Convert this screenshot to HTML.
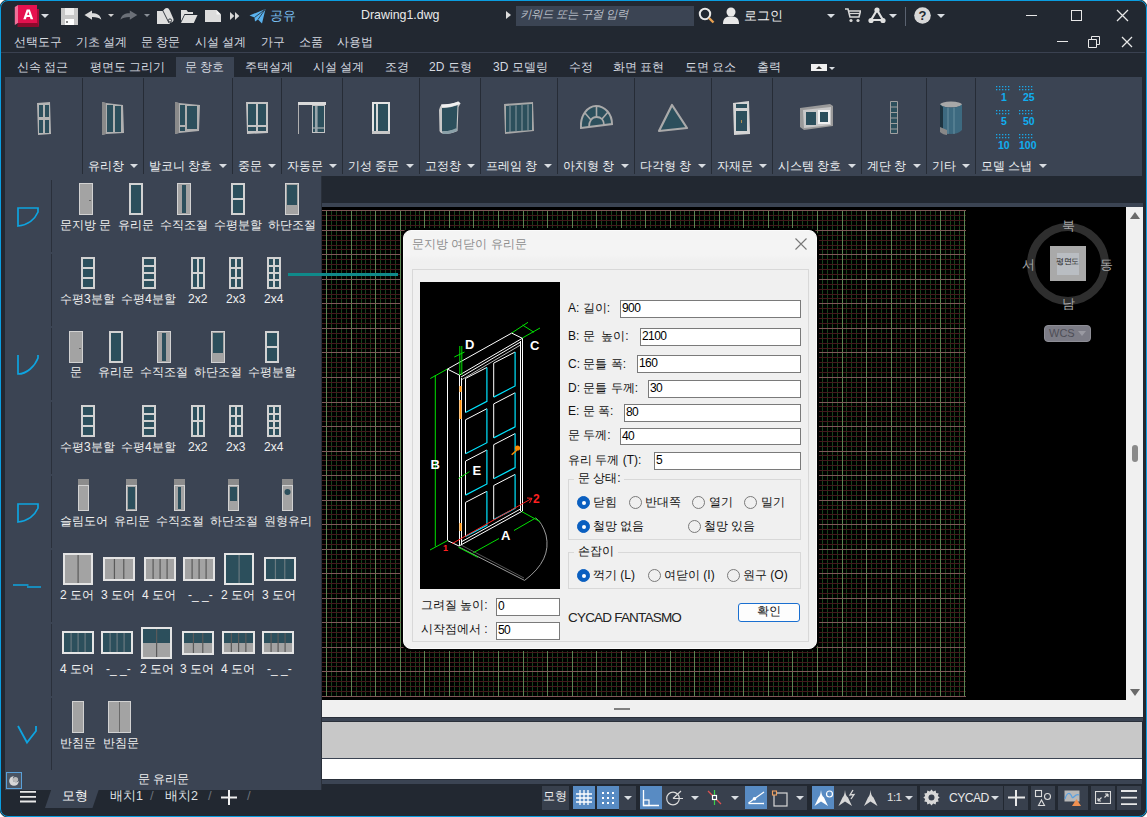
<!DOCTYPE html>
<html><head><meta charset="utf-8">
<style>
*{box-sizing:border-box;margin:0;padding:0}
html,body{width:1147px;height:817px;overflow:hidden;background:#fff}
body{font-family:"Liberation Sans",sans-serif;font-size:13px;color:#e6e6e6;position:relative}
.a{position:absolute}
.t{position:absolute;white-space:nowrap;line-height:1}
#win{left:0;top:0;width:1147px;height:817px;background:#222831;border:1px solid #0a9de0;border-radius:8px;box-shadow:0 0 0 0.5px #222}
.menu{color:#d6dae0;font-size:12.2px}
.tab{color:#d6dae0;font-size:12px}
.rib{background:#3b4453}
.sep{position:absolute;width:1px;background:#262c36}
.lbl{color:#eef0f2;font-size:12.1px}
.dd{position:absolute;width:0;height:0;border-left:4px solid transparent;border-right:4px solid transparent;border-top:4px solid #d9dde2}
.fl{color:#f0f0f0;font-size:12px}
.dlg{color:#111;font-size:12px}
.inp{position:absolute;background:#fff;border:1px solid #7a7a7a;font-size:12px;color:#000;padding-left:1px;line-height:15px;letter-spacing:-0.6px}
.rad{position:absolute;width:13px;height:13px;border-radius:50%;border:1px solid #7a7a7a;background:transparent}
.rad.on{border-color:#0a5fc0;background:#0a5fc0}
.rad.on:after{content:"";position:absolute;left:3.5px;top:3.5px;width:4px;height:4px;border-radius:50%;background:#fff}
.sb{position:absolute;top:786px;height:24px;background:#38404d}
.sbb{position:absolute;top:786px;height:23px;background:#588bc3}
</style></head><body>
<div id="win" class="a"></div>

<!-- ribbon tab row active -->
<div class="a" style="left:176px;top:57px;width:58px;height:20px;background:#3b4453"></div>
<!-- line under menu -->
<div class="a" style="left:1px;top:52px;width:1144px;height:1px;background:#3a4150"></div>

<!-- ribbon panel -->
<div class="a rib" style="left:5px;top:77px;width:1137px;height:99px"></div>

<!-- canvas top strip -->
<div class="a" style="left:321px;top:203px;width:822px;height:4px;background:#3b4453"></div>
<!-- canvas -->
<div class="a" style="left:321px;top:207px;width:821px;height:493px;background:#000"></div>
<!--GRID--><svg class="a" style="left:321px;top:207px" width="821" height="493" shape-rendering="crispEdges">
<path d="M0.5 3V490M10.5 3V490M15.5 3V490M20.5 3V490M25.5 3V490M35.5 3V490M40.5 3V490M44.5 3V490M49.5 3V490M59.5 3V490M64.5 3V490M69.5 3V490M74.5 3V490M84.5 3V490M89.5 3V490M94.5 3V490M98.5 3V490M108.5 3V490M113.5 3V490M118.5 3V490M123.5 3V490M133.5 3V490M138.5 3V490M143.5 3V490M148.5 3V490M157.5 3V490M162.5 3V490M167.5 3V490M172.5 3V490M182.5 3V490M187.5 3V490M192.5 3V490M197.5 3V490M206.5 3V490M211.5 3V490M216.5 3V490M221.5 3V490M231.5 3V490M236.5 3V490M241.5 3V490M246.5 3V490M256.5 3V490M260.5 3V490M265.5 3V490M270.5 3V490M280.5 3V490M285.5 3V490M290.5 3V490M295.5 3V490M305.5 3V490M309.5 3V490M314.5 3V490M319.5 3V490M329.5 3V490M334.5 3V490M339.5 3V490M344.5 3V490M354.5 3V490M359.5 3V490M363.5 3V490M368.5 3V490M378.5 3V490M383.5 3V490M388.5 3V490M393.5 3V490M403.5 3V490M408.5 3V490M413.5 3V490M417.5 3V490M427.5 3V490M432.5 3V490M437.5 3V490M442.5 3V490M452.5 3V490M457.5 3V490M462.5 3V490M467.5 3V490M476.5 3V490M481.5 3V490M486.5 3V490M491.5 3V490M501.5 3V490M506.5 3V490M511.5 3V490M516.5 3V490M525.5 3V490M530.5 3V490M535.5 3V490M540.5 3V490M550.5 3V490M555.5 3V490M560.5 3V490M565.5 3V490M575.5 3V490M579.5 3V490M584.5 3V490M589.5 3V490M599.5 3V490M604.5 3V490M609.5 3V490M614.5 3V490M624.5 3V490M629.5 3V490M633.5 3V490M638.5 3V490" stroke="#1a421b" stroke-width="1"/>
<path d="M0 8.5H645M0 13.5H645M0 18.5H645M0 28.5H645M0 33.5H645M0 38.5H645M0 42.5H645M0 52.5H645M0 57.5H645M0 62.5H645M0 67.5H645M0 77.5H645M0 82.5H645M0 87.5H645M0 91.5H645M0 101.5H645M0 106.5H645M0 111.5H645M0 116.5H645M0 126.5H645M0 131.5H645M0 136.5H645M0 141.5H645M0 150.5H645M0 155.5H645M0 160.5H645M0 165.5H645M0 175.5H645M0 180.5H645M0 185.5H645M0 190.5H645M0 199.5H645M0 204.5H645M0 209.5H645M0 214.5H645M0 224.5H645M0 229.5H645M0 234.5H645M0 239.5H645M0 248.5H645M0 253.5H645M0 258.5H645M0 263.5H645M0 273.5H645M0 278.5H645M0 283.5H645M0 288.5H645M0 298.5H645M0 302.5H645M0 307.5H645M0 312.5H645M0 322.5H645M0 327.5H645M0 332.5H645M0 337.5H645M0 347.5H645M0 352.5H645M0 356.5H645M0 361.5H645M0 371.5H645M0 376.5H645M0 381.5H645M0 386.5H645M0 396.5H645M0 401.5H645M0 405.5H645M0 410.5H645M0 420.5H645M0 425.5H645M0 430.5H645M0 435.5H645M0 445.5H645M0 450.5H645M0 455.5H645M0 459.5H645M0 469.5H645M0 474.5H645M0 479.5H645M0 484.5H645" stroke="#441a1c" stroke-width="1"/>
<path d="M5.5 3V490M30.5 3V490M54.5 3V490M79.5 3V490M103.5 3V490M128.5 3V490M152.5 3V490M177.5 3V490M202.5 3V490M226.5 3V490M251.5 3V490M275.5 3V490M300.5 3V490M324.5 3V490M349.5 3V490M373.5 3V490M398.5 3V490M422.5 3V490M447.5 3V490M471.5 3V490M496.5 3V490M521.5 3V490M545.5 3V490M570.5 3V490M594.5 3V490M619.5 3V490M643.5 3V490" stroke="#5a8552" stroke-width="1"/>
<path d="M0 3.5H645M0 23.5H645M0 47.5H645M0 72.5H645M0 96.5H645M0 121.5H645M0 145.5H645M0 170.5H645M0 195.5H645M0 219.5H645M0 244.5H645M0 268.5H645M0 293.5H645M0 317.5H645M0 342.5H645M0 366.5H645M0 391.5H645M0 415.5H645M0 440.5H645M0 464.5H645M0 489.5H645" stroke="#805858" stroke-width="1"/>
</svg><!--/GRID-->

<!-- scrollbar -->
<div class="a" style="left:1126px;top:207px;width:17px;height:493px;background:#f0f0f0"></div>
<div class="a" style="left:1132px;top:445px;width:6px;height:17px;border-radius:3px;background:#8a8a8a"></div>

<!-- bottom bars -->
<div class="a" style="left:321px;top:700px;width:822px;height:17px;background:#f0f0f0"></div>
<div class="a" style="left:614px;top:708px;width:16px;height:2px;background:#808080"></div>
<div class="a" style="left:321px;top:717px;width:822px;height:5px;background:#3b4453;border-top:1px solid #2a303a;border-bottom:1px solid #2a303a"></div>
<div class="a" style="left:321px;top:722px;width:821px;height:36px;background:#c8c8c8"></div>
<div class="a" style="left:321px;top:758px;width:821px;height:1px;background:#3b4453"></div>
<div class="a" style="left:321px;top:759px;width:821px;height:20px;background:#fff"></div>
<div class="a" style="left:321px;top:779px;width:821px;height:5px;background:#3b4453;border-top:1px solid #2a303a"></div>

<!-- TITLEBAR -->
<svg class="a" style="left:14px;top:5px" width="26" height="23" viewBox="0 0 26 23">
<path d="M4 0 H23 V18 H4 Z" fill="#e5114f"/>
<path d="M0.8 2 L4 0 V18 L0.8 20 Z" fill="#f07098"/>
<path d="M3.5 18 H23 L25 22 H3.5 Z" fill="#8c0a2c"/>
<path d="M23 4 H25 V22 L23 18 Z" fill="#a80c38"/>
<path d="M9.3 14.2 L12.7 4.4 H15.8 L19.2 14.2 H16.6 L15.9 12 H12.6 L11.9 14.2 Z M13.1 9.9 H15.4 L14.25 6.4 Z" fill="#fff" fill-rule="evenodd"/>
</svg>
<div class="dd" style="left:41px;top:14px"></div>
<svg class="a" style="left:61px;top:8px" width="17" height="17" viewBox="0 0 17 17">
<path d="M0 0H17V17H0Z" fill="#c8c8c8"/><path d="M4 0H13V7H4Z" fill="#efefef"/><path d="M4 11H13V17H4Z" fill="#fff"/><path d="M5 13H7V15H5Z" fill="#888"/>
</svg>
<svg class="a" style="left:84px;top:10px" width="18" height="11" viewBox="0 0 18 11"><path d="M0.5 5 L8 0.5 V3.3 C13 3.3 16.5 5 17.3 9.8 C15.5 7.8 12.5 7 8 7 V9.8 Z" fill="#dcdcdc"/></svg>
<div class="dd" style="left:108px;top:14px;border-left-width:3px;border-right-width:3px;border-top:3.5px solid #d0d0d0"></div>
<svg class="a" style="left:120px;top:10px" width="18" height="11" viewBox="0 0 18 11"><path d="M17.3 5 L9.8 0.5 V3.3 C4.8 3.3 1.3 5 0.5 9.8 C2.3 7.8 5.3 7 9.8 7 V9.8 Z" fill="#6b7078"/></svg>
<div class="dd" style="left:144px;top:14px;border-left-width:3px;border-right-width:3px;border-top:3.5px solid #8a9098"></div>
<svg class="a" style="left:157px;top:8px" width="17" height="16" viewBox="0 0 17 16"><path d="M0 3 L6 3 C7 1.5 8 0 10 0 C11.5 0 12 1 13 3 L16.5 11 C17 13.5 15 15 13 14.5 L12.5 16 H0 Z" fill="#dedede"/><path d="M6 3 L12 15" stroke="#222831" stroke-width="0.9"/><circle cx="13" cy="12.5" r="1.6" fill="none" stroke="#222831" stroke-width="0.9"/></svg>
<svg class="a" style="left:181px;top:10px" width="17" height="13" viewBox="0 0 17 13"><path d="M0 0 H5.5 L7 2 H12 V4 H3.5 L0 11 Z" fill="#dedede"/><path d="M3.8 5 H16.5 L12.8 13 H0 Z" fill="#dedede"/></svg>
<svg class="a" style="left:205px;top:10px" width="16" height="12" viewBox="0 0 16 12"><path d="M0 0 H11.5 L16 4.5 V12 H0 Z" fill="#dcdcdc"/><path d="M11.5 0 L16 4.5 H11.5 Z" fill="#f4f4f4"/></svg>
<svg class="a" style="left:230px;top:12px" width="10" height="8"><path d="M0 0 L4.3 4 L0 8Z M5 0 L9.3 4 L5 8Z" fill="#d8d8d8"/></svg>
<svg class="a" style="left:249px;top:9px" width="17" height="15" viewBox="0 0 17 15"><path d="M0.5 6.5 L16.5 0 L13 14.5 L9 10.5 L6 12.5 L5.5 8.5 Z" fill="#5ab2ee"/><path d="M5.5 8.5 L16 0.5 M9 10.5 L16 0.5" stroke="#222831" stroke-width="0.8"/></svg>
<div class="t menu" style="left:270px;top:9px;font-size:13px;color:#7cc0f4">공유</div>
<div class="t" style="left:361px;top:9px;font-size:12.4px;color:#eaeaea">Drawing1.dwg</div>
<div class="a" style="left:506px;top:11px;width:0;height:0;border-top:4px solid transparent;border-bottom:4px solid transparent;border-left:5px solid #ddd"></div>
<div class="a" style="left:516px;top:6px;width:178px;height:20px;background:#3b4453"></div>
<div class="t" style="left:520px;top:9px;font-size:11.4px;color:#b8bec6;font-style:italic">키워드 또는 구절 입력</div>
<svg class="a" style="left:698px;top:7px" width="17" height="17" viewBox="0 0 17 17"><circle cx="7" cy="7" r="5.2" fill="none" stroke="#e8e8e8" stroke-width="2"/><path d="M11 11 L15.5 15.5" stroke="#e8a050" stroke-width="2.4"/></svg>
<svg class="a" style="left:723px;top:7px" width="16" height="17" viewBox="0 0 16 17"><circle cx="8" cy="5" r="4.5" fill="#e8e8e8"/><path d="M0 17 C0 11 3 9.5 8 9.5 C13 9.5 16 11 16 17Z" fill="#e8e8e8"/></svg>
<div class="t menu" style="left:744px;top:9px;font-size:13px;color:#f0f0f0">로그인</div>
<div class="dd" style="left:827px;top:14px"></div>
<svg class="a" style="left:845px;top:8px" width="16" height="15" viewBox="0 0 16 15"><path d="M0 1 H3 L5 9 H14 L15.5 3 H4" fill="none" stroke="#d8d8d8" stroke-width="1.6"/><path d="M5 5.5 H15" stroke="#d8d8d8" stroke-width="1.2"/><circle cx="6" cy="12.5" r="1.6" fill="#d8d8d8"/><circle cx="13" cy="12.5" r="1.6" fill="#d8d8d8"/></svg>
<svg class="a" style="left:868px;top:7px" width="18" height="17" viewBox="0 0 18 17"><path d="M9 3 L3 13 M9 3 L15 13 M3 13 H15" stroke="#e0e0e0" stroke-width="2.2" fill="none"/><circle cx="9" cy="3" r="2.6" fill="#e0e0e0"/><circle cx="3" cy="13.5" r="2.6" fill="#e0e0e0"/><circle cx="15" cy="13.5" r="2.6" fill="#e0e0e0"/></svg>
<div class="dd" style="left:889px;top:14px"></div>
<div class="a" style="left:905px;top:7px;width:1px;height:19px;background:#5a6270"></div>
<svg class="a" style="left:914px;top:7px" width="17" height="17" viewBox="0 0 17 17"><circle cx="8.5" cy="8.5" r="8.3" fill="#d8d8d8"/><text x="8.5" y="13.2" text-anchor="middle" font-family="Liberation Sans" font-weight="bold" font-size="13" fill="#222831">?</text></svg>
<div class="dd" style="left:937px;top:14px"></div>
<!-- window controls -->
<div class="a" style="left:1026px;top:15px;width:11px;height:1px;background:#e8e8e8"></div>
<div class="a" style="left:1071px;top:10px;width:11px;height:11px;border:1px solid #e8e8e8"></div>
<svg class="a" style="left:1116px;top:9px" width="13" height="13"><path d="M1 1 L12 12 M12 1 L1 12" stroke="#e8e8e8" stroke-width="1.3"/></svg>
<div class="a" style="left:1057px;top:41px;width:11px;height:1px;background:#e8e8e8"></div>
<svg class="a" style="left:1088px;top:36px" width="12" height="12"><path d="M0.5 3.5 H8.5 V11.5 H0.5Z M3.5 3.5 V0.5 H11.5 V8.5 H8.5" fill="none" stroke="#e8e8e8" stroke-width="1"/></svg>
<svg class="a" style="left:1121px;top:36px" width="12" height="12"><path d="M1 1 L11 11 M11 1 L1 11" stroke="#e8e8e8" stroke-width="1.3"/></svg>

<!-- MENU -->
<div class="t menu" style="left:14px;top:36px">선택도구</div>
<div class="t menu" style="left:76px;top:36px">기초 설계</div>
<div class="t menu" style="left:141px;top:36px">문 창문</div>
<div class="t menu" style="left:195px;top:36px">시설 설계</div>
<div class="t menu" style="left:261px;top:36px">가구</div>
<div class="t menu" style="left:299px;top:36px">소품</div>
<div class="t menu" style="left:337px;top:36px">사용법</div>

<!-- TABS -->
<div class="t tab" style="left:17px;top:61px">신속 접근</div>
<div class="t tab" style="left:90px;top:61px">평면도 그리기</div>
<div class="t tab" style="left:185px;top:61px">문 창호</div>
<div class="t tab" style="left:245px;top:61px">주택설계</div>
<div class="t tab" style="left:313px;top:61px">시설 설계</div>
<div class="t tab" style="left:385px;top:61px">조경</div>
<div class="t tab" style="left:429px;top:61px">2D 도형</div>
<div class="t tab" style="left:493px;top:61px">3D 모델링</div>
<div class="t tab" style="left:569px;top:61px">수정</div>
<div class="t tab" style="left:613px;top:61px">화면 표현</div>
<div class="t tab" style="left:685px;top:61px">도면 요소</div>
<div class="t tab" style="left:757px;top:61px">출력</div>
<div class="a" style="left:811px;top:64px;width:16px;height:7px;background:#f0f0f0"></div>
<div class="a" style="left:816px;top:66px;width:0;height:0;border-left:3px solid transparent;border-right:3px solid transparent;border-bottom:3px solid #333"></div>
<div class="dd" style="left:829px;top:67px;border-left-width:3px;border-right-width:3px;border-top-width:3px"></div>

<!-- RIBBON separators -->
<div class="sep" style="left:82px;top:78px;height:96px"></div>
<div class="sep" style="left:143px;top:78px;height:96px"></div>
<div class="sep" style="left:232px;top:78px;height:96px"></div>
<div class="sep" style="left:281px;top:78px;height:96px"></div>
<div class="sep" style="left:342px;top:78px;height:96px"></div>
<div class="sep" style="left:419px;top:78px;height:96px"></div>
<div class="sep" style="left:480px;top:78px;height:96px"></div>
<div class="sep" style="left:557px;top:78px;height:96px"></div>
<div class="sep" style="left:634px;top:78px;height:96px"></div>
<div class="sep" style="left:711px;top:78px;height:96px"></div>
<div class="sep" style="left:772px;top:78px;height:96px"></div>
<div class="sep" style="left:861px;top:78px;height:96px"></div>
<div class="sep" style="left:926px;top:78px;height:96px"></div>
<div class="sep" style="left:975px;top:78px;height:96px"></div>
<!-- RIBBON labels -->
<div class="t lbl" style="left:88px;top:160px">유리창</div><div class="dd" style="left:130px;top:164px"></div>
<div class="t lbl" style="left:149px;top:160px">발코니 창호</div><div class="dd" style="left:219px;top:164px"></div>
<div class="t lbl" style="left:238px;top:160px">중문</div><div class="dd" style="left:268px;top:164px"></div>
<div class="t lbl" style="left:287px;top:160px">자동문</div><div class="dd" style="left:329px;top:164px"></div>
<div class="t lbl" style="left:348px;top:160px">기성 중문</div><div class="dd" style="left:406px;top:164px"></div>
<div class="t lbl" style="left:425px;top:160px">고정창</div><div class="dd" style="left:467px;top:164px"></div>
<div class="t lbl" style="left:486px;top:160px">프레임 창</div><div class="dd" style="left:544px;top:164px"></div>
<div class="t lbl" style="left:563px;top:160px">아치형 창</div><div class="dd" style="left:621px;top:164px"></div>
<div class="t lbl" style="left:640px;top:160px">다각형 창</div><div class="dd" style="left:698px;top:164px"></div>
<div class="t lbl" style="left:717px;top:160px">자재문</div><div class="dd" style="left:759px;top:164px"></div>
<div class="t lbl" style="left:778px;top:160px">시스템 창호</div><div class="dd" style="left:848px;top:164px"></div>
<div class="t lbl" style="left:867px;top:160px">계단 창</div><div class="dd" style="left:913px;top:164px"></div>
<div class="t lbl" style="left:932px;top:160px">기타</div><div class="dd" style="left:962px;top:164px"></div>
<div class="t lbl" style="left:981px;top:160px">모델 스냅</div><div class="dd" style="left:1039px;top:164px"></div>
<!-- RIBBON icons -->
<svg class="a" style="left:37px;top:102px" width="14" height="33" viewBox="0 0 14 33"><path d="M0 1 L13 0 L14 32 L1 33Z" fill="#b4b4b4"/><path d="M2 3H6V15H2Z M8 3H12V15H8Z M2 18H6V31H2Z M8 18H12V31H8Z" fill="#2c4f5c"/></svg>
<svg class="a" style="left:102px;top:102px" width="22" height="33" viewBox="0 0 22 33"><path d="M0 0 L4 1 L21 3 L22 31 L4 32 L0 33Z" fill="#b0b0b0"/><path d="M0 0 L4 1 L4 32 L0 33Z" fill="#8a8a8a"/><path d="M5 3H11V30H5Z M13 4H19V30H13Z" fill="#2c4f5c"/></svg>
<svg class="a" style="left:175px;top:102px" width="25" height="32" viewBox="0 0 25 32"><path d="M0 0 L4 1 L25 3 L24 29 L4 31 L0 32Z" fill="#b0b0b0"/><path d="M0 0 L4 1 L4 31 L0 32Z" fill="#8a8a8a"/><path d="M5 3H10V23H5Z M5 25H10V29H5Z M12 4H22V27H12Z" fill="#2c4f5c"/></svg>
<svg class="a" style="left:246px;top:102px" width="22" height="32" viewBox="0 0 22 32"><path d="M0 0H22V31L1 32Z" fill="#c4c4c4"/><path d="M2 2H10V23H2Z M12 2H20V23H12Z M2 25H10V29H2Z M12 25H20V29H12Z" fill="#2c4f5c"/></svg>
<svg class="a" style="left:298px;top:102px" width="28" height="32" viewBox="0 0 28 32"><rect x="0" y="0" width="28" height="3" fill="#dadada"/><rect x="0" y="3" width="1" height="29" fill="#b0b0b0"/><rect x="14" y="3" width="13" height="28" fill="#c4c4c4"/><rect x="15" y="4" width="2" height="21.5" fill="#2c4f5c"/><rect x="17" y="4" width="2.5" height="26" fill="#98a4aa"/><rect x="19.5" y="4" width="6.5" height="21.5" fill="#2c4f5c"/><rect x="15" y="26.5" width="2" height="3.5" fill="#2c4f5c"/><rect x="19.5" y="26.5" width="6.5" height="3.5" fill="#2c4f5c"/></svg>
<svg class="a" style="left:372px;top:102px" width="19" height="32" viewBox="0 0 19 32"><path d="M0 0H18V32H0Z" fill="#e4e4e4"/><path d="M2 2H16V29H2Z" fill="#2c4f5c"/><path d="M4 2H6V29H4Z" fill="#d8d8d8"/><path d="M0 29H18V32H0Z" fill="#c8c8c8"/></svg>
<svg class="a" style="left:439px;top:101px" width="22" height="34" viewBox="0 0 22 34"><path d="M1 6 C2 4 3 3.5 4 3.5 C10 3.5 15 2.5 19 0.5 L21.5 2.5 L19.5 6 L18.5 30 C14 32 8 33.5 5 33 C3 32.5 1 31.5 0.5 30 L0 9Z" fill="#c8c8c8"/><path d="M3 7 C9 7 14 6 18.5 4 L17.5 28 C13 29.5 8 30.5 3 30.5Z" fill="#2c4f5c"/><path d="M2 3.5 C8 3.5 15 2.5 19.5 0.5 L21.5 2.5 C17 5 9 6.5 3 6.5Z" fill="#f0f0f0"/><path d="M3 30.5 C8 30.5 13 29.5 17.5 27 L18 30 C13 32.5 8 33 4 33Z" fill="#8aa0a8"/></svg>
<svg class="a" style="left:504px;top:102px" width="30" height="32" viewBox="0 0 30 32"><path d="M0 2 L29 0 L30 29 L1 32Z" fill="#a8a8a8"/><path d="M2 4L28 2L28 28L2 30Z" fill="#2c4f5c"/><path d="M6 4V30 M12 3.5V29.5 M18 3V29 M24 2.5V28.5" stroke="#8a9aa0" stroke-width="1"/></svg>
<svg class="a" style="left:580px;top:105px" width="33" height="24" viewBox="0 0 33 24"><path d="M1 23 C0 10 8 1 16 1 C25 1 32 9 32 19Z" fill="#2c4f5c" stroke="#aaa" stroke-width="2"/><path d="M9 22 C9 16 12 12 16.5 12 C21 12 24 15 24 20" fill="none" stroke="#aaa" stroke-width="1.8"/><path d="M16.5 1V12 M5 8 L11 15 M28 7 L22 14" stroke="#aaa" stroke-width="1.6"/></svg>
<svg class="a" style="left:657px;top:102px" width="32" height="31" viewBox="0 0 32 31"><path d="M15 3 L30 26 L2 29Z" fill="#2c4f5c" stroke="#aaa" stroke-width="2.2" stroke-linejoin="round"/></svg>
<svg class="a" style="left:733px;top:101px" width="18" height="34" viewBox="0 0 18 34"><path d="M0 2 L16 0 L17 33 L1 34Z" fill="#d4d4d4"/><path d="M3 3H14V7H3Z M3 10H14V30H3Z" fill="#2c4f5c"/><path d="M8 19H9V22H8Z" fill="#b09050"/></svg>
<svg class="a" style="left:800px;top:104px" width="33" height="26" viewBox="0 0 33 26"><path d="M0 4 L30 0 L33 2 L33 22 L4 26 L0 23Z" fill="#9a9a9a"/><path d="M3 6 L31 3 L31 21 L4 24Z" fill="#c8c8c8"/><path d="M6 8H16V21H6Z" fill="#2c4f5c"/><path d="M18 6H30V20H18Z" fill="#f0f0f0"/><path d="M20 8H28V18H20Z" fill="#2c4f5c"/></svg>
<svg class="a" style="left:890px;top:101px" width="8" height="33" viewBox="0 0 8 33"><path d="M0.5 0.5H7.5V32.5H0.5Z M0.5 6H7.5 M0.5 11.5H7.5 M0.5 17H7.5 M0.5 22.5H7.5 M0.5 28H7.5" fill="#2c4f5c" stroke="#a0a0a0" stroke-width="1"/></svg>
<svg class="a" style="left:939px;top:101px" width="24" height="34" viewBox="0 0 24 34"><ellipse cx="12" cy="3.5" rx="11" ry="3" fill="#a8a8a8"/><path d="M1 3.5V29 C4 32 8 33 12 33 C16 33 20 32 23 29V3.5 C20 6 16 6.5 12 6.5 C8 6.5 4 6 1 3.5Z" fill="#3d6a80"/><path d="M1 3.5V29 C2 30 3 30.5 4 31V6Z" fill="#1e3440"/><path d="M9 6.5V33 M15 6.5V33" stroke="#6a90a0" stroke-width="1"/><path d="M1 26V31 C3 33 6 34 8 34V29Z" fill="#888"/></svg>
<!-- model snap -->
<svg class="a" style="left:990px;top:80px" width="50" height="60"><g fill="#19a8e8"><rect x="6" y="6" width="1.3" height="1.3"/><rect x="9" y="6" width="1.3" height="1.3"/><rect x="12" y="6" width="1.3" height="1.3"/><rect x="15" y="6" width="1.3" height="1.3"/><rect x="18" y="6" width="1.3" height="1.3"/><rect x="6" y="9" width="1.3" height="1.3"/><rect x="9" y="9" width="1.3" height="1.3"/><rect x="12" y="9" width="1.3" height="1.3"/><rect x="15" y="9" width="1.3" height="1.3"/><rect x="18" y="9" width="1.3" height="1.3"/><rect x="29" y="6" width="1.3" height="1.3"/><rect x="32" y="6" width="1.3" height="1.3"/><rect x="35" y="6" width="1.3" height="1.3"/><rect x="38" y="6" width="1.3" height="1.3"/><rect x="41" y="6" width="1.3" height="1.3"/><rect x="29" y="9" width="1.3" height="1.3"/><rect x="32" y="9" width="1.3" height="1.3"/><rect x="35" y="9" width="1.3" height="1.3"/><rect x="38" y="9" width="1.3" height="1.3"/><rect x="41" y="9" width="1.3" height="1.3"/><rect x="6" y="30" width="1.3" height="1.3"/><rect x="9" y="30" width="1.3" height="1.3"/><rect x="12" y="30" width="1.3" height="1.3"/><rect x="15" y="30" width="1.3" height="1.3"/><rect x="18" y="30" width="1.3" height="1.3"/><rect x="6" y="33" width="1.3" height="1.3"/><rect x="9" y="33" width="1.3" height="1.3"/><rect x="12" y="33" width="1.3" height="1.3"/><rect x="15" y="33" width="1.3" height="1.3"/><rect x="18" y="33" width="1.3" height="1.3"/><rect x="29" y="30" width="1.3" height="1.3"/><rect x="32" y="30" width="1.3" height="1.3"/><rect x="35" y="30" width="1.3" height="1.3"/><rect x="38" y="30" width="1.3" height="1.3"/><rect x="41" y="30" width="1.3" height="1.3"/><rect x="29" y="33" width="1.3" height="1.3"/><rect x="32" y="33" width="1.3" height="1.3"/><rect x="35" y="33" width="1.3" height="1.3"/><rect x="38" y="33" width="1.3" height="1.3"/><rect x="41" y="33" width="1.3" height="1.3"/><rect x="6" y="54" width="1.3" height="1.3"/><rect x="9" y="54" width="1.3" height="1.3"/><rect x="12" y="54" width="1.3" height="1.3"/><rect x="15" y="54" width="1.3" height="1.3"/><rect x="18" y="54" width="1.3" height="1.3"/><rect x="6" y="57" width="1.3" height="1.3"/><rect x="9" y="57" width="1.3" height="1.3"/><rect x="12" y="57" width="1.3" height="1.3"/><rect x="15" y="57" width="1.3" height="1.3"/><rect x="18" y="57" width="1.3" height="1.3"/><rect x="29" y="54" width="1.3" height="1.3"/><rect x="32" y="54" width="1.3" height="1.3"/><rect x="35" y="54" width="1.3" height="1.3"/><rect x="38" y="54" width="1.3" height="1.3"/><rect x="41" y="54" width="1.3" height="1.3"/><rect x="29" y="57" width="1.3" height="1.3"/><rect x="32" y="57" width="1.3" height="1.3"/><rect x="35" y="57" width="1.3" height="1.3"/><rect x="38" y="57" width="1.3" height="1.3"/><rect x="41" y="57" width="1.3" height="1.3"/></g></svg>
<div class="t" style="left:1001px;top:92px;font-size:10.5px;font-weight:bold;color:#10aef0">1</div>
<div class="t" style="left:1023px;top:92px;font-size:10.5px;font-weight:bold;color:#10aef0">25</div>
<div class="t" style="left:1001px;top:116px;font-size:10.5px;font-weight:bold;color:#10aef0">5</div>
<div class="t" style="left:1023px;top:116px;font-size:10.5px;font-weight:bold;color:#10aef0">50</div>
<div class="t" style="left:998px;top:140px;font-size:10.5px;font-weight:bold;color:#10aef0">10</div>
<div class="t" style="left:1019px;top:140px;font-size:10.5px;font-weight:bold;color:#10aef0">100</div>

<!-- VIEWCUBE -->
<svg class="a" style="left:1020px;top:215px" width="96" height="96" viewBox="0 0 96 96">
<circle cx="48" cy="49" r="37" fill="none" stroke="#2e2e2e" stroke-width="8"/>
<rect x="30" y="31" width="36" height="35" fill="#a9a9a9"/>
<rect x="37" y="38" width="22" height="22" fill="#b9bdc2"/>
</svg>
<div class="t" style="left:1056px;top:258px;font-size:8px;color:#222;letter-spacing:-0.5px">평면도</div>
<div class="t" style="left:1062px;top:220px;font-size:12.5px;color:#a8a8a8">북</div>
<div class="t" style="left:1062px;top:298px;font-size:12.5px;color:#a8a8a8">남</div>
<div class="t" style="left:1022px;top:259px;font-size:12.5px;color:#a8a8a8">서</div>
<div class="t" style="left:1100px;top:259px;font-size:12.5px;color:#a8a8a8">동</div>
<div class="a" style="left:1044px;top:325px;width:47px;height:17px;border-radius:4px;background:#7c7c86;border:1px solid #8e8e96"></div>
<div class="t" style="left:1049px;top:328px;font-size:11px;color:#4e4e56">WCS</div>
<div class="a" style="left:1078px;top:331px;width:0;height:0;border-left:4px solid transparent;border-right:4px solid transparent;border-top:5px solid #9a9aa2"></div>
<div class="a" style="left:1130px;top:212px;width:0;height:0;border-left:5px solid transparent;border-right:5px solid transparent;border-bottom:7px solid #6a6a6a"></div>
<div class="a" style="left:1130px;top:689px;width:0;height:0;border-left:5px solid transparent;border-right:5px solid transparent;border-top:7px solid #6a6a6a"></div>

<!-- STATUS BAR -->

<svg class="a" style="left:20px;top:790px" width="16" height="13"><path d="M0 1.8H16 M0 6.8H16 M0 11.5H16" stroke="#e8e8e8" stroke-width="1.8"/></svg>
<svg class="a" style="left:45px;top:786px" width="56" height="22"><path d="M7.5 0 H55 L47.5 22 H0Z" fill="#3b4453"/></svg>
<div class="t" style="left:62px;top:790px;font-size:12.5px;color:#f8f8f8">모형</div>
<div class="t" style="left:110px;top:790px;font-size:12.5px;color:#dde0e4">배치1</div>
<div class="t" style="left:150px;top:789px;font-size:13px;color:#6a707a">/</div>
<div class="t" style="left:165px;top:790px;font-size:12.5px;color:#dde0e4">배치2</div>
<div class="t" style="left:208px;top:789px;font-size:13px;color:#6a707a">/</div>
<svg class="a" style="left:221px;top:790px" width="16" height="15"><path d="M8 0V15 M0 7.5H16" stroke="#f0f0f0" stroke-width="2"/></svg>
<div class="t" style="left:247px;top:789px;font-size:13px;color:#6a707a">/</div>

<div class="sb" style="left:542px;width:27px"></div>
<div class="t" style="left:543px;top:790px;font-size:12.2px;color:#f0f0f0">모형</div>
<div class="sbb" style="left:573px;width:22px"></div>
<svg class="a" style="left:575px;top:789px" width="18" height="17"><path d="M5 1V16 M9 1V16 M13 1V16 M1 5H17 M1 9H17 M1 13H17" stroke="#fff" stroke-width="1.3"/></svg>
<div class="sbb" style="left:597px;width:22px"></div>
<svg class="a" style="left:601px;top:791px" width="14" height="14"><g fill="#fff"><rect x="1" y="1" width="2" height="2"/><rect x="6" y="1" width="2" height="2"/><rect x="11" y="1" width="2" height="2"/><rect x="1" y="6" width="2" height="2"/><rect x="6" y="6" width="2" height="2"/><rect x="11" y="6" width="2" height="2"/><rect x="1" y="11" width="2" height="2"/><rect x="6" y="11" width="2" height="2"/><rect x="11" y="11" width="2" height="2"/></g></svg>
<div class="sb" style="left:619px;width:17px"></div>
<div class="dd" style="left:624px;top:796px"></div>
<div class="sb" style="left:640px;width:167px"></div>
<div class="sbb" style="left:640px;width:22px"></div>
<svg class="a" style="left:642px;top:789px" width="18" height="18"><path d="M1.5 1V16.5H17" stroke="#fff" stroke-width="1.3" fill="none"/><rect x="1.5" y="11" width="5.5" height="5.5" fill="none" stroke="#fff" stroke-width="1.2"/></svg>
<svg class="a" style="left:664px;top:788px" width="22" height="20"><circle cx="9" cy="10.5" r="6.3" fill="none" stroke="#dcdcdc" stroke-width="1.2"/><path d="M9 10.5 H19 M9 10.5 L17 3" stroke="#dcdcdc" stroke-width="1.2"/></svg>
<div class="dd" style="left:691px;top:796px"></div>
<svg class="a" style="left:706px;top:788px" width="18" height="20"><path d="M2 3 L15 16" stroke="#e05050" stroke-width="1.2"/><path d="M8.5 2 V17" stroke="#3cd04c" stroke-width="1.2"/><rect x="6.5" y="7.5" width="4" height="4" fill="#3a4250" stroke="#fff" stroke-width="1.2"/></svg>
<div class="dd" style="left:731px;top:796px"></div>
<div class="sbb" style="left:745px;width:22px"></div>
<svg class="a" style="left:747px;top:789px" width="18" height="18"><path d="M1.5 14 L17 3" stroke="#fff" stroke-width="1.3" fill="none"/><path d="M1.5 14.5H17" stroke="#fff" stroke-width="1.3"/><circle cx="7.5" cy="9.7" r="1.8" fill="#fff"/></svg>
<svg class="a" style="left:771px;top:790px" width="18" height="17"><rect x="3" y="3" width="13" height="13" fill="none" stroke="#d8d8d8" stroke-width="1.2"/><rect x="1.5" y="1" width="4" height="4" fill="#38404d" stroke="#f0a060" stroke-width="1.1"/></svg>
<div class="dd" style="left:796px;top:796px"></div>
<div class="sb" style="left:812px;width:105px"></div>
<div class="sbb" style="left:812px;width:22px"></div>
<svg class="a" style="left:814px;top:788px" width="20" height="20"><path d="M7 2 C7.5 6 8 8 10 9.5 L14 18 L7 13.5 L0.5 18 L4.5 9.5 C6 8 6.5 6 7 2Z" fill="#fff"/><circle cx="15.5" cy="6" r="3" fill="none" stroke="#fff" stroke-width="1.2"/></svg>
<svg class="a" style="left:838px;top:788px" width="20" height="20"><path d="M7 2 C7.5 6 8 8 10 9.5 L14 18 L7 13.5 L0.5 18 L4.5 9.5 C6 8 6.5 6 7 2Z" fill="#d8d8d8"/><path d="M15 2 L12 7 L16 6.5 L13 11" stroke="#d8d8d8" stroke-width="1.3" fill="none"/></svg>
<svg class="a" style="left:863px;top:788px" width="16" height="20"><path d="M7.5 2 C8 6 8.5 8 10.5 9.5 L14.5 18 L7.5 13.5 L1 18 L5 9.5 C6.5 8 7 6 7.5 2Z" fill="#d8d8d8"/></svg>
<div class="t" style="left:887px;top:792px;font-size:11.5px;color:#e0e0e0;letter-spacing:-0.5px">1:1</div>
<div class="dd" style="left:905px;top:796px"></div>
<div class="sb" style="left:920px;width:83px"></div>
<svg class="a" style="left:923px;top:789px" width="17" height="17" viewBox="0 0 18 18"><path d="M9 0.5 L10.8 2.6 L13.4 1.6 L13.9 4.2 L16.6 4.8 L15.7 7.4 L17.6 9 L15.7 10.6 L16.6 13.2 L13.9 13.8 L13.4 16.4 L10.8 15.4 L9 17.5 L7.2 15.4 L4.6 16.4 L4.1 13.8 L1.4 13.2 L2.3 10.6 L0.4 9 L2.3 7.4 L1.4 4.8 L4.1 4.2 L4.6 1.6 L7.2 2.6Z" fill="#d8d8d8"/><circle cx="9" cy="9" r="3.2" fill="#38404d"/></svg>
<div class="t" style="left:949px;top:792px;font-size:12.2px;color:#e8e8e8;letter-spacing:-0.6px">CYCAD</div>
<div class="dd" style="left:991px;top:796px"></div>
<div class="sb" style="left:1004px;width:24px"></div>
<svg class="a" style="left:1008px;top:790px" width="17" height="16"><path d="M8 0V16 M0 7.5H17" stroke="#e8e8e8" stroke-width="2"/></svg>
<div class="sb" style="left:1031px;width:24px"></div>
<svg class="a" style="left:1034px;top:789px" width="18" height="18"><rect x="1.5" y="1.5" width="6" height="6" fill="none" stroke="#dcdcdc" stroke-width="1.1"/><circle cx="13.5" cy="7.5" r="3" fill="none" stroke="#dcdcdc" stroke-width="1.1"/><path d="M4.5 16.5 L7.5 11 L10.5 16.5Z" fill="none" stroke="#dcdcdc" stroke-width="1.1"/></svg>
<div class="sb" style="left:1058px;width:30px"></div>
<svg class="a" style="left:1064px;top:789px" width="19" height="18"><rect x="0.5" y="1.5" width="15" height="11" fill="#b8b8b8"/><path d="M1 10 C3 3 6 3 8 8 C9 11 11 4 15 6" stroke="#5aa0e0" stroke-width="1.2" fill="none"/><path d="M8 17 L12.5 10 L17 17Z" fill="#f09050"/></svg>
<div class="sb" style="left:1091px;width:24px"></div>
<svg class="a" style="left:1095px;top:791px" width="16" height="13"><rect x="0.5" y="0.5" width="15" height="12" fill="none" stroke="#dcdcdc" stroke-width="1.1"/><path d="M3 10 L6.5 6.5 M3 10V7 M3 10H6 M13 3 L9.5 6.5 M13 3V6 M13 3H10" stroke="#dcdcdc" stroke-width="1.1" fill="none"/></svg>
<div class="sb" style="left:1117px;width:24px"></div>
<svg class="a" style="left:1121px;top:790px" width="16" height="16"><path d="M0 1H16 M0 7.7H16 M0 14.2H16" stroke="#e8e8e8" stroke-width="1.8"/></svg>


<!-- DIALOG -->
<div class="a" style="left:403px;top:230px;width:414px;height:419px;background:#f0f0f0;border:1px solid #fafafa;border-radius:8px;box-shadow:0 0 0 2px #000;overflow:hidden">
  <div class="a" style="left:0;top:0;width:412px;height:30px;background:linear-gradient(#f4f4f4 0 24px,#f0f0f0 30px)"></div>
</div>
<div class="t" style="left:412px;top:238px;font-size:12.3px;color:#8e8e8e">문지방 여닫이 유리문</div>
<svg class="a" style="left:795px;top:238px" width="12" height="12"><path d="M0.5 0.5 L11.5 11.5 M11.5 0.5 L0.5 11.5" stroke="#777" stroke-width="1.1"/></svg>
<div class="a" style="left:412px;top:269px;width:397px;height:373px;border:1px solid #d8d8d8"></div>
<div class="a" style="left:420px;top:282px;width:140px;height:307px;background:#000"></div>
<!--DOOR--><svg class="a" style="left:420px;top:282px" width="140" height="307" viewBox="0 0 140 307"><path d="M39.0 265.0 L104.6 298.4 Q132.0 278.0 126.0 253.0 Q122.0 240.0 115.6 236.0" stroke="#9a9a9a" stroke-width="1" fill="none"/><path d="M41.0 263.0 L104.0 296.0" stroke="#555" stroke-width="1" fill="none"/><path d="M27.4 87.1 L91.7 51.1 L102.3 56.3 L39.4 93.1 L27.4 87.1" stroke="#ffffff" stroke-width="1" fill="none"/><path d="M41.0 95.0 L100.5 60.0" stroke="#ffffff" stroke-width="1" fill="none"/><path d="M42.0 97.5 L100.5 63.0" stroke="#bbb" stroke-width="1" fill="none"/><path d="M27.5 87.0 L27.5 258.6 L39.0 264.0" stroke="#ffffff" stroke-width="1" fill="none"/><path d="M39.5 93.0 L39.5 264.0" stroke="#ffffff" stroke-width="1" fill="none"/><path d="M41.5 96.0 L41.5 263.0" stroke="#ffffff" stroke-width="1" fill="none"/><path d="M100.5 59.0 L100.5 229.0" stroke="#ffffff" stroke-width="1" fill="none"/><path d="M102.5 56.0 L102.5 229.0" stroke="#ffffff" stroke-width="1" fill="none"/><path d="M39.0 264.0 L102.5 229.0" stroke="#ffffff" stroke-width="1" fill="none"/><path d="M41.0 260.0 L100.5 227.0" stroke="#ffffff" stroke-width="1" fill="none"/><path d="M45.5 130.5 L45.5 96.5 L66.9 85.4" stroke="#ffffff" stroke-width="1" fill="none"/><path d="M66.9 85.4 L66.9 119.4 L45.5 130.5" stroke="#00e5ff" stroke-width="1.2" fill="none"/><path d="M73.7 115.1 L73.7 81.1 L95.1 70.0" stroke="#ffffff" stroke-width="1" fill="none"/><path d="M95.1 70.0 L95.1 104.0 L73.7 115.1" stroke="#00e5ff" stroke-width="1.2" fill="none"/><path d="M45.5 171.8 L45.5 137.8 L66.9 126.7" stroke="#ffffff" stroke-width="1" fill="none"/><path d="M66.9 126.7 L66.9 160.7 L45.5 171.8" stroke="#00e5ff" stroke-width="1.2" fill="none"/><path d="M73.7 155.9 L73.7 121.9 L95.1 110.8" stroke="#ffffff" stroke-width="1" fill="none"/><path d="M95.1 110.8 L95.1 144.8 L73.7 155.9" stroke="#00e5ff" stroke-width="1.2" fill="none"/><path d="M45.5 213.1 L45.5 179.1 L66.9 168.0" stroke="#ffffff" stroke-width="1" fill="none"/><path d="M66.9 168.0 L66.9 202.0 L45.5 213.1" stroke="#00e5ff" stroke-width="1.2" fill="none"/><path d="M73.7 196.7 L73.7 162.7 L95.1 151.6" stroke="#ffffff" stroke-width="1" fill="none"/><path d="M95.1 151.6 L95.1 185.6 L73.7 196.7" stroke="#00e5ff" stroke-width="1.2" fill="none"/><path d="M45.5 254.4 L45.5 220.4 L66.9 209.3" stroke="#ffffff" stroke-width="1" fill="none"/><path d="M66.9 209.3 L66.9 243.3 L45.5 254.4" stroke="#00e5ff" stroke-width="1.2" fill="none"/><path d="M73.7 237.5 L73.7 203.5 L95.1 192.4" stroke="#ffffff" stroke-width="1" fill="none"/><path d="M95.1 192.4 L95.1 226.4 L73.7 237.5" stroke="#00e5ff" stroke-width="1.2" fill="none"/><path d="M15.3 93.0 L15.3 264.5" stroke="#00e000" stroke-width="1" fill="none"/><path d="M10.3 96.5 L27.4 87.0" stroke="#00e000" stroke-width="1" fill="none"/><path d="M10.0 268.0 L27.5 258.6" stroke="#00e000" stroke-width="1" fill="none"/><path d="M39.8 64.0 L39.8 93.0" stroke="#00e000" stroke-width="1" fill="none"/><path d="M41.8 64.0 L41.8 93.0" stroke="#00e000" stroke-width="1" fill="none"/><path d="M34.3 75.0 L44.5 70.0" stroke="#00e000" stroke-width="1" fill="none"/><path d="M91.7 51.0 L108.0 40.3" stroke="#00e000" stroke-width="1" fill="none"/><path d="M102.3 56.0 L120.0 46.0" stroke="#00e000" stroke-width="1" fill="none"/><path d="M102.5 43.0 L114.0 50.3" stroke="#00e000" stroke-width="1" fill="none"/><path d="M38.5 265.3 L57.8 275.4" stroke="#00e000" stroke-width="1" fill="none"/><path d="M101.8 229.6 L120.2 239.7" stroke="#00e000" stroke-width="1" fill="none"/><path d="M53.2 270.8 L79.0 256.5" stroke="#00e000" stroke-width="1" fill="none"/><path d="M94.0 248.5 L115.6 236.0" stroke="#00e000" stroke-width="1" fill="none"/><path d="M38.5 196.5 L49.5 189.6" stroke="#00e000" stroke-width="1" fill="none"/><path d="M32.0 261.7 L112.0 216.3" stroke="#ff2020" stroke-width="1" fill="none"/><path d="M107.0 216.0 L112.0 216.3 L109.5 221.0" stroke="#ff2020" stroke-width="1" fill="none"/><path d="M40.5 104.0 L40.5 110.0" stroke="#ff8c00" stroke-width="2" fill="none"/><path d="M40.5 118.0 L40.5 137.0" stroke="#ff8c00" stroke-width="2" fill="none"/><path d="M40.5 241.0 L40.5 249.0" stroke="#ff8c00" stroke-width="2" fill="none"/><circle cx="97.5" cy="166" r="2.6" fill="#ff8c00"/><path d="M91.7 172.7 L97.0 168.0" stroke="#ff8c00" stroke-width="1.5" fill="none"/><text x="45" y="67" font-family="Liberation Sans" font-weight="bold" font-size="13" fill="#ffffff">D</text><text x="110" y="68" font-family="Liberation Sans" font-weight="bold" font-size="13" fill="#ffffff">C</text><text x="10.5" y="186.5" font-family="Liberation Sans" font-weight="bold" font-size="13" fill="#ffffff">B</text><text x="52.5" y="192.5" font-family="Liberation Sans" font-weight="bold" font-size="13" fill="#ffffff">E</text><text x="81" y="258" font-family="Liberation Sans" font-weight="bold" font-size="13" fill="#ffffff">A</text><text x="113" y="221" font-family="Liberation Sans" font-weight="bold" font-size="12" fill="#ff2020">2</text><text x="23" y="269" font-family="Liberation Sans" font-weight="bold" font-size="9" fill="#ff2020">1</text></svg><!--/DOOR-->
<div class="t dlg" style="left:568px;top:302px">A: 길이:</div>
<div class="inp" style="left:620px;top:300px;width:181px;height:18px">900</div>
<div class="t dlg" style="left:568px;top:330px">B: 문 &nbsp;높이:</div>
<div class="inp" style="left:640px;top:328px;width:161px;height:18px">2100</div>
<div class="t dlg" style="left:568px;top:358px">C: 문틀 폭:</div>
<div class="inp" style="left:637px;top:355px;width:164px;height:18px">160</div>
<div class="t dlg" style="left:568px;top:382px">D: 문틀 두께:</div>
<div class="inp" style="left:648px;top:380px;width:153px;height:18px">30</div>
<div class="t dlg" style="left:568px;top:405px">E: 문 폭:</div>
<div class="inp" style="left:624px;top:404px;width:177px;height:18px">80</div>
<div class="t dlg" style="left:568px;top:429px">문 두께:</div>
<div class="inp" style="left:620px;top:428px;width:181px;height:17px">40</div>
<div class="t dlg" style="left:568px;top:454px">유리 두께 (T):</div>
<div class="inp" style="left:654px;top:452px;width:147px;height:18px">5</div>
<!-- group 1 -->
<div class="a" style="left:568px;top:479px;width:233px;height:61px;border:1px solid #d8d8d8"></div>
<div class="a" style="left:574px;top:471px;width:50px;height:14px;background:#f0f0f0"></div>
<div class="t dlg" style="left:578px;top:472px">문 상태:</div>
<div class="rad on" style="left:577px;top:496px"></div><div class="t dlg" style="left:593px;top:496px">닫힘</div>
<div class="rad" style="left:629px;top:496px"></div><div class="t dlg" style="left:645px;top:496px">반대쪽</div>
<div class="rad" style="left:692px;top:496px"></div><div class="t dlg" style="left:709px;top:496px">열기</div>
<div class="rad" style="left:744px;top:496px"></div><div class="t dlg" style="left:761px;top:496px">밀기</div>
<div class="rad on" style="left:577px;top:520px"></div><div class="t dlg" style="left:593px;top:520px">철망 없음</div>
<div class="rad" style="left:688px;top:520px"></div><div class="t dlg" style="left:704px;top:520px">철망 있음</div>
<!-- group 2 -->
<div class="a" style="left:568px;top:552px;width:233px;height:37px;border:1px solid #d8d8d8"></div>
<div class="a" style="left:574px;top:544px;width:44px;height:14px;background:#f0f0f0"></div>
<div class="t dlg" style="left:578px;top:545px">손잡이</div>
<div class="rad on" style="left:577px;top:569px"></div><div class="t dlg" style="left:593px;top:569px">꺽기 (L)</div>
<div class="rad" style="left:648px;top:569px"></div><div class="t dlg" style="left:664px;top:569px">여닫이 (I)</div>
<div class="rad" style="left:727px;top:569px"></div><div class="t dlg" style="left:743px;top:569px">원구 (O)</div>
<!-- bottom -->
<div class="t dlg" style="left:421px;top:599px">그려질 높이:</div>
<div class="inp" style="left:496px;top:598px;width:64px;height:18px">0</div>
<div class="t dlg" style="left:421px;top:623px">시작점에서 :</div>
<div class="inp" style="left:496px;top:622px;width:64px;height:18px">50</div>
<div class="t dlg" style="left:568px;top:611px;font-size:13.5px;letter-spacing:-0.8px;color:#222">CYCAD FANTASMO</div>
<div class="a" style="left:738px;top:603px;width:62px;height:19px;border:1px solid #1a6fd0;border-radius:3px;background:#fdfdfd"></div>
<div class="t dlg" style="left:757px;top:605px">확인</div>

<!-- left flyout -->
<div class="a rib" style="left:5px;top:176px;width:317px;height:614px;border-right:1px solid #2a303a"></div>

<!--FLY--><svg class="a" style="left:79px;top:183px" width="14" height="32" viewBox="0 0 14 32"><rect x="0" y="0" width="14" height="32" fill="#d2d2d2"/><rect x="1" y="1" width="12" height="30" fill="#a3a3a3"/><rect x="10" y="17" width="2" height="1" fill="#666"/></svg>
<svg class="a" style="left:129px;top:183px" width="14" height="32" viewBox="0 0 14 32"><rect x="0" y="0" width="14" height="32" fill="#d2d2d2"/><rect x="2" y="2" width="10" height="28" fill="#2c4f5c"/></svg>
<svg class="a" style="left:177px;top:183px" width="14" height="32" viewBox="0 0 14 32"><rect x="0" y="0" width="14" height="32" fill="#d2d2d2"/><rect x="1" y="1" width="12" height="30" fill="#a3a3a3"/><rect x="5" y="2" width="4" height="28" fill="#2c4f5c"/></svg>
<svg class="a" style="left:231px;top:183px" width="14" height="32" viewBox="0 0 14 32"><rect x="0" y="0" width="14" height="32" fill="#d2d2d2"/><rect x="2" y="2" width="10" height="13" fill="#2c4f5c"/><rect x="2" y="17" width="10" height="13" fill="#2c4f5c"/></svg>
<svg class="a" style="left:285px;top:183px" width="14" height="32" viewBox="0 0 14 32"><rect x="0" y="0" width="14" height="32" fill="#d2d2d2"/><rect x="1" y="1" width="12" height="30" fill="#a3a3a3"/><rect x="2" y="2" width="10" height="20" fill="#2c4f5c"/></svg>
<div class="t fl" style="left:60px;top:219px">문지방 문</div>
<div class="t fl" style="left:118px;top:219px">유리문</div>
<div class="t fl" style="left:160px;top:219px">수직조절</div>
<div class="t fl" style="left:214px;top:219px">수평분할</div>
<div class="t fl" style="left:268px;top:219px">하단조절</div>
<svg class="a" style="left:81px;top:257px" width="14" height="32" viewBox="0 0 14 32"><rect x="0" y="0" width="14" height="32" fill="#d2d2d2"/><rect x="2" y="2" width="10" height="8" fill="#2c4f5c"/><rect x="2" y="12" width="10" height="8" fill="#2c4f5c"/><rect x="2" y="22" width="10" height="8" fill="#2c4f5c"/></svg>
<svg class="a" style="left:142px;top:257px" width="14" height="32" viewBox="0 0 14 32"><rect x="0" y="0" width="14" height="32" fill="#d2d2d2"/><rect x="2" y="2" width="10" height="6" fill="#2c4f5c"/><rect x="2" y="10" width="10" height="5" fill="#2c4f5c"/><rect x="2" y="17" width="10" height="5" fill="#2c4f5c"/><rect x="2" y="24" width="10" height="6" fill="#2c4f5c"/></svg>
<svg class="a" style="left:191px;top:257px" width="14" height="32" viewBox="0 0 14 32"><rect x="0" y="0" width="14" height="32" fill="#d2d2d2"/><rect x="2" y="2" width="4" height="13" fill="#2c4f5c"/><rect x="8" y="2" width="4" height="13" fill="#2c4f5c"/><rect x="2" y="17" width="4" height="13" fill="#2c4f5c"/><rect x="8" y="17" width="4" height="13" fill="#2c4f5c"/></svg>
<svg class="a" style="left:229px;top:257px" width="14" height="32" viewBox="0 0 14 32"><rect x="0" y="0" width="14" height="32" fill="#d2d2d2"/><rect x="2" y="2" width="4" height="8" fill="#2c4f5c"/><rect x="8" y="2" width="4" height="8" fill="#2c4f5c"/><rect x="2" y="12" width="4" height="8" fill="#2c4f5c"/><rect x="8" y="12" width="4" height="8" fill="#2c4f5c"/><rect x="2" y="22" width="4" height="8" fill="#2c4f5c"/><rect x="8" y="22" width="4" height="8" fill="#2c4f5c"/></svg>
<svg class="a" style="left:267px;top:257px" width="14" height="32" viewBox="0 0 14 32"><rect x="0" y="0" width="14" height="32" fill="#d2d2d2"/><rect x="2" y="2" width="4" height="6" fill="#2c4f5c"/><rect x="8" y="2" width="4" height="6" fill="#2c4f5c"/><rect x="2" y="10" width="4" height="5" fill="#2c4f5c"/><rect x="8" y="10" width="4" height="5" fill="#2c4f5c"/><rect x="2" y="17" width="4" height="5" fill="#2c4f5c"/><rect x="8" y="17" width="4" height="5" fill="#2c4f5c"/><rect x="2" y="24" width="4" height="6" fill="#2c4f5c"/><rect x="8" y="24" width="4" height="6" fill="#2c4f5c"/></svg>
<div class="t fl" style="left:60px;top:293px">수평3분할</div>
<div class="t fl" style="left:121px;top:293px">수평4분할</div>
<div class="t fl" style="left:188px;top:293px">2x2</div>
<div class="t fl" style="left:226px;top:293px">2x3</div>
<div class="t fl" style="left:264px;top:293px">2x4</div>
<svg class="a" style="left:69px;top:331px" width="14" height="32" viewBox="0 0 14 32"><rect x="0" y="0" width="14" height="32" fill="#d2d2d2"/><rect x="1" y="1" width="12" height="30" fill="#a3a3a3"/><rect x="10" y="17" width="2" height="1" fill="#666"/></svg>
<svg class="a" style="left:109px;top:331px" width="14" height="32" viewBox="0 0 14 32"><rect x="0" y="0" width="14" height="32" fill="#d2d2d2"/><rect x="2" y="2" width="10" height="28" fill="#2c4f5c"/></svg>
<svg class="a" style="left:157px;top:331px" width="14" height="32" viewBox="0 0 14 32"><rect x="0" y="0" width="14" height="32" fill="#d2d2d2"/><rect x="1" y="1" width="12" height="30" fill="#a3a3a3"/><rect x="5" y="2" width="4" height="28" fill="#2c4f5c"/></svg>
<svg class="a" style="left:211px;top:331px" width="14" height="32" viewBox="0 0 14 32"><rect x="0" y="0" width="14" height="32" fill="#d2d2d2"/><rect x="1" y="1" width="12" height="30" fill="#a3a3a3"/><rect x="2" y="2" width="10" height="20" fill="#2c4f5c"/></svg>
<svg class="a" style="left:265px;top:331px" width="14" height="32" viewBox="0 0 14 32"><rect x="0" y="0" width="14" height="32" fill="#d2d2d2"/><rect x="2" y="2" width="10" height="13" fill="#2c4f5c"/><rect x="2" y="17" width="10" height="13" fill="#2c4f5c"/></svg>
<div class="t fl" style="left:70px;top:366px">문</div>
<div class="t fl" style="left:98px;top:366px">유리문</div>
<div class="t fl" style="left:140px;top:366px">수직조절</div>
<div class="t fl" style="left:194px;top:366px">하단조절</div>
<div class="t fl" style="left:248px;top:366px">수평분할</div>
<svg class="a" style="left:81px;top:405px" width="14" height="32" viewBox="0 0 14 32"><rect x="0" y="0" width="14" height="32" fill="#d2d2d2"/><rect x="2" y="2" width="10" height="8" fill="#2c4f5c"/><rect x="2" y="12" width="10" height="8" fill="#2c4f5c"/><rect x="2" y="22" width="10" height="8" fill="#2c4f5c"/></svg>
<svg class="a" style="left:142px;top:405px" width="14" height="32" viewBox="0 0 14 32"><rect x="0" y="0" width="14" height="32" fill="#d2d2d2"/><rect x="2" y="2" width="10" height="6" fill="#2c4f5c"/><rect x="2" y="10" width="10" height="5" fill="#2c4f5c"/><rect x="2" y="17" width="10" height="5" fill="#2c4f5c"/><rect x="2" y="24" width="10" height="6" fill="#2c4f5c"/></svg>
<svg class="a" style="left:191px;top:405px" width="14" height="32" viewBox="0 0 14 32"><rect x="0" y="0" width="14" height="32" fill="#d2d2d2"/><rect x="2" y="2" width="4" height="13" fill="#2c4f5c"/><rect x="8" y="2" width="4" height="13" fill="#2c4f5c"/><rect x="2" y="17" width="4" height="13" fill="#2c4f5c"/><rect x="8" y="17" width="4" height="13" fill="#2c4f5c"/></svg>
<svg class="a" style="left:229px;top:405px" width="14" height="32" viewBox="0 0 14 32"><rect x="0" y="0" width="14" height="32" fill="#d2d2d2"/><rect x="2" y="2" width="4" height="8" fill="#2c4f5c"/><rect x="8" y="2" width="4" height="8" fill="#2c4f5c"/><rect x="2" y="12" width="4" height="8" fill="#2c4f5c"/><rect x="8" y="12" width="4" height="8" fill="#2c4f5c"/><rect x="2" y="22" width="4" height="8" fill="#2c4f5c"/><rect x="8" y="22" width="4" height="8" fill="#2c4f5c"/></svg>
<svg class="a" style="left:267px;top:405px" width="14" height="32" viewBox="0 0 14 32"><rect x="0" y="0" width="14" height="32" fill="#d2d2d2"/><rect x="2" y="2" width="4" height="6" fill="#2c4f5c"/><rect x="8" y="2" width="4" height="6" fill="#2c4f5c"/><rect x="2" y="10" width="4" height="5" fill="#2c4f5c"/><rect x="8" y="10" width="4" height="5" fill="#2c4f5c"/><rect x="2" y="17" width="4" height="5" fill="#2c4f5c"/><rect x="8" y="17" width="4" height="5" fill="#2c4f5c"/><rect x="2" y="24" width="4" height="6" fill="#2c4f5c"/><rect x="8" y="24" width="4" height="6" fill="#2c4f5c"/></svg>
<div class="t fl" style="left:60px;top:441px">수평3분할</div>
<div class="t fl" style="left:121px;top:441px">수평4분할</div>
<div class="t fl" style="left:188px;top:441px">2x2</div>
<div class="t fl" style="left:226px;top:441px">2x3</div>
<div class="t fl" style="left:264px;top:441px">2x4</div>
<svg class="a" style="left:78px;top:479px" width="11" height="32" viewBox="0 0 11 32"><rect x="0" y="0" width="11" height="6" fill="#8c8c8c"/><rect x="0" y="6" width="11" height="26" fill="#d2d2d2"/><rect x="1" y="7" width="9" height="24" fill="#a3a3a3"/></svg>
<svg class="a" style="left:126px;top:479px" width="11" height="32" viewBox="0 0 11 32"><rect x="0" y="0" width="11" height="6" fill="#8c8c8c"/><rect x="0" y="6" width="11" height="26" fill="#d2d2d2"/><rect x="1" y="7" width="9" height="24" fill="#a3a3a3"/><rect x="2" y="8" width="7" height="22" fill="#2c4f5c"/></svg>
<svg class="a" style="left:174px;top:479px" width="11" height="32" viewBox="0 0 11 32"><rect x="0" y="0" width="11" height="6" fill="#8c8c8c"/><rect x="0" y="6" width="11" height="26" fill="#d2d2d2"/><rect x="1" y="7" width="9" height="24" fill="#a3a3a3"/><rect x="4" y="8" width="3" height="22" fill="#2c4f5c"/></svg>
<svg class="a" style="left:228px;top:479px" width="11" height="32" viewBox="0 0 11 32"><rect x="0" y="0" width="11" height="6" fill="#8c8c8c"/><rect x="0" y="6" width="11" height="26" fill="#d2d2d2"/><rect x="1" y="7" width="9" height="24" fill="#a3a3a3"/><rect x="2" y="8" width="7" height="14" fill="#2c4f5c"/></svg>
<svg class="a" style="left:282px;top:479px" width="11" height="32" viewBox="0 0 11 32"><rect x="0" y="0" width="11" height="6" fill="#8c8c8c"/><rect x="0" y="6" width="11" height="26" fill="#d2d2d2"/><rect x="1" y="7" width="9" height="24" fill="#a3a3a3"/><circle cx="5.5" cy="13" r="3" fill="#2c4f5c"/></svg>
<div class="t fl" style="left:60px;top:515px">슬림도어</div>
<div class="t fl" style="left:114px;top:515px">유리문</div>
<div class="t fl" style="left:156px;top:515px">수직조절</div>
<div class="t fl" style="left:210px;top:515px">하단조절</div>
<div class="t fl" style="left:264px;top:515px">원형유리</div>
<svg class="a" style="left:63px;top:553px" width="30" height="32" viewBox="0 0 30 32"><rect x="0" y="0" width="30" height="32" fill="#e4e4e4"/><rect x="2" y="2" width="26" height="28" fill="#a3a3a3"/><rect x="14.5" y="2" width="1.2" height="28" fill="#5a5a5a"/></svg>
<svg class="a" style="left:103px;top:557px" width="32" height="24" viewBox="0 0 32 24"><rect x="0" y="0" width="32" height="24" fill="#e4e4e4"/><rect x="2" y="2" width="28" height="20" fill="#a3a3a3"/><rect x="10.83" y="2" width="1.2" height="20" fill="#5a5a5a"/><rect x="20.17" y="2" width="1.2" height="20" fill="#5a5a5a"/></svg>
<svg class="a" style="left:144px;top:557px" width="32" height="24" viewBox="0 0 32 24"><rect x="0" y="0" width="32" height="24" fill="#e4e4e4"/><rect x="2" y="2" width="28" height="20" fill="#a3a3a3"/><rect x="8.5" y="2" width="1.2" height="20" fill="#5a5a5a"/><rect x="15.5" y="2" width="1.2" height="20" fill="#5a5a5a"/><rect x="22.5" y="2" width="1.2" height="20" fill="#5a5a5a"/></svg>
<svg class="a" style="left:183px;top:557px" width="32" height="24" viewBox="0 0 32 24"><rect x="0" y="0" width="32" height="24" fill="#e4e4e4"/><rect x="2" y="2" width="28" height="20" fill="#a3a3a3"/><rect x="8.5" y="2" width="1.2" height="20" fill="#5a5a5a"/><rect x="15.5" y="2" width="1.2" height="20" fill="#5a5a5a"/><rect x="22.5" y="2" width="1.2" height="20" fill="#5a5a5a"/></svg>
<svg class="a" style="left:224px;top:553px" width="30" height="32" viewBox="0 0 30 32"><rect x="0" y="0" width="30" height="32" fill="#e4e4e4"/><rect x="2" y="2" width="26" height="28" fill="#2c4f5c"/><rect x="14.5" y="2" width="1.2" height="28" fill="#6a7a80"/></svg>
<svg class="a" style="left:264px;top:557px" width="32" height="24" viewBox="0 0 32 24"><rect x="0" y="0" width="32" height="24" fill="#e4e4e4"/><rect x="2" y="2" width="28" height="20" fill="#2c4f5c"/><rect x="10.83" y="2" width="1.2" height="20" fill="#6a7a80"/><rect x="20.17" y="2" width="1.2" height="20" fill="#6a7a80"/></svg>
<div class="t fl" style="left:60px;top:589px">2 도어</div>
<div class="t fl" style="left:101px;top:589px">3 도어</div>
<div class="t fl" style="left:142px;top:589px">4 도어</div>
<div class="t fl" style="left:188px;top:589px">-_ _-</div>
<div class="t fl" style="left:221px;top:589px">2 도어</div>
<div class="t fl" style="left:262px;top:589px">3 도어</div>
<svg class="a" style="left:62px;top:631px" width="32" height="23" viewBox="0 0 32 23"><rect x="0" y="0" width="32" height="23" fill="#e4e4e4"/><rect x="2" y="2" width="28" height="19" fill="#2c4f5c"/><rect x="8.5" y="2" width="1.2" height="19" fill="#6a7a80"/><rect x="15.5" y="2" width="1.2" height="19" fill="#6a7a80"/><rect x="22.5" y="2" width="1.2" height="19" fill="#6a7a80"/></svg>
<svg class="a" style="left:101px;top:631px" width="32" height="23" viewBox="0 0 32 23"><rect x="0" y="0" width="32" height="23" fill="#e4e4e4"/><rect x="2" y="2" width="28" height="19" fill="#2c4f5c"/><rect x="8.5" y="2" width="1.2" height="19" fill="#6a7a80"/><rect x="15.5" y="2" width="1.2" height="19" fill="#6a7a80"/><rect x="22.5" y="2" width="1.2" height="19" fill="#6a7a80"/></svg>
<svg class="a" style="left:141px;top:627px" width="31" height="32" viewBox="0 0 31 32"><rect x="0" y="0" width="31" height="32" fill="#e4e4e4"/><rect x="2" y="2" width="27" height="28" fill="#a3a3a3"/><rect x="2" y="2" width="27" height="14" fill="#2c4f5c"/><rect x="15.0" y="2" width="1.2" height="28" fill="#5a5a5a"/></svg>
<svg class="a" style="left:182px;top:631px" width="32" height="24" viewBox="0 0 32 24"><rect x="0" y="0" width="32" height="24" fill="#e4e4e4"/><rect x="2" y="2" width="28" height="20" fill="#a3a3a3"/><rect x="2" y="2" width="28" height="10" fill="#2c4f5c"/><rect x="10.83" y="2" width="1.2" height="20" fill="#5a5a5a"/><rect x="20.17" y="2" width="1.2" height="20" fill="#5a5a5a"/></svg>
<svg class="a" style="left:222px;top:631px" width="33" height="23" viewBox="0 0 33 23"><rect x="0" y="0" width="33" height="23" fill="#e4e4e4"/><rect x="2" y="2" width="29" height="19" fill="#a3a3a3"/><rect x="2" y="2" width="29" height="10" fill="#2c4f5c"/><rect x="8.75" y="2" width="1.2" height="19" fill="#5a5a5a"/><rect x="16.0" y="2" width="1.2" height="19" fill="#5a5a5a"/><rect x="23.25" y="2" width="1.2" height="19" fill="#5a5a5a"/></svg>
<svg class="a" style="left:262px;top:631px" width="32" height="23" viewBox="0 0 32 23"><rect x="0" y="0" width="32" height="23" fill="#e4e4e4"/><rect x="2" y="2" width="28" height="19" fill="#a3a3a3"/><rect x="2" y="2" width="28" height="10" fill="#2c4f5c"/><rect x="8.5" y="2" width="1.2" height="19" fill="#5a5a5a"/><rect x="15.5" y="2" width="1.2" height="19" fill="#5a5a5a"/><rect x="22.5" y="2" width="1.2" height="19" fill="#5a5a5a"/></svg>
<div class="t fl" style="left:60px;top:663px">4 도어</div>
<div class="t fl" style="left:106px;top:663px">-_ _-</div>
<div class="t fl" style="left:140px;top:663px">2 도어</div>
<div class="t fl" style="left:180px;top:663px">3 도어</div>
<div class="t fl" style="left:221px;top:663px">4 도어</div>
<div class="t fl" style="left:267px;top:663px">-_ _-</div>
<svg class="a" style="left:72px;top:701px" width="12" height="32" viewBox="0 0 12 32"><rect x="0" y="0" width="12" height="32" fill="#d2d2d2"/><rect x="1" y="1" width="10" height="30" fill="#a3a3a3"/></svg>
<svg class="a" style="left:108px;top:701px" width="23" height="32" viewBox="0 0 23 32"><rect x="0" y="0" width="23" height="32" fill="#d2d2d2"/><rect x="1" y="1" width="21" height="30" fill="#a3a3a3"/><rect x="11" y="1" width="1" height="30" fill="#6a6a6a"/></svg>
<div class="t fl" style="left:60px;top:737px">반침문</div>
<div class="t fl" style="left:103px;top:737px">반침문</div>
<div class="sep" style="left:51px;top:180px;height:72px;background:#2a303b"></div>
<div class="sep" style="left:51px;top:254px;height:72px;background:#2a303b"></div>
<div class="sep" style="left:51px;top:328px;height:72px;background:#2a303b"></div>
<div class="sep" style="left:51px;top:402px;height:72px;background:#2a303b"></div>
<div class="sep" style="left:51px;top:476px;height:72px;background:#2a303b"></div>
<div class="sep" style="left:51px;top:550px;height:72px;background:#2a303b"></div>
<div class="sep" style="left:51px;top:624px;height:72px;background:#2a303b"></div>
<div class="sep" style="left:51px;top:698px;height:72px;background:#2a303b"></div>
<svg class="a" style="left:15px;top:205px" width="26" height="24" viewBox="0 0 26 24"><path d="M3 3H23V7 C20 14 13 20 3 21Z" fill="none" stroke="#0ea4e0" stroke-width="1.7"/></svg>
<svg class="a" style="left:15px;top:353px" width="26" height="24" viewBox="0 0 26 24"><path d="M3 2V21 C12 21 20 13 23 5V2" fill="none" stroke="#0ea4e0" stroke-width="1.7"/></svg>
<svg class="a" style="left:15px;top:501px" width="26" height="24" viewBox="0 0 26 24"><path d="M3 3H23V7 C20 14 13 20 3 21Z" fill="none" stroke="#0ea4e0" stroke-width="1.7"/></svg>
<svg class="a" style="left:12px;top:582px" width="31" height="8" viewBox="0 0 31 8"><path d="M1 3H16.5 M15 5H29" fill="none" stroke="#0ea4e0" stroke-width="1.7"/></svg>
<svg class="a" style="left:15px;top:724px" width="26" height="22" viewBox="0 0 26 22"><path d="M3 2 L12 18.5 L21 7V2" fill="none" stroke="#0ea4e0" stroke-width="1.8"/></svg>
<div class="a" style="left:6px;top:772px;width:16px;height:17px;border:1px solid #5aa0d8;background:#4a5462"></div>
<svg class="a" style="left:8px;top:775px" width="12" height="11" viewBox="0 0 12 11"><circle cx="6" cy="6" r="4.8" fill="#d8d8d8"/><circle cx="8" cy="4" r="3.2" fill="#4a5462"/><circle cx="7.5" cy="4.5" r="2.6" fill="#bbb"/></svg>
<div class="t fl" style="left:138px;top:773px">문 유리문</div><!--/FLY-->
<!-- teal connector -->
<div class="a" style="left:288px;top:273px;width:110px;height:3px;background:#0f8a8a"></div>
</body></html>
